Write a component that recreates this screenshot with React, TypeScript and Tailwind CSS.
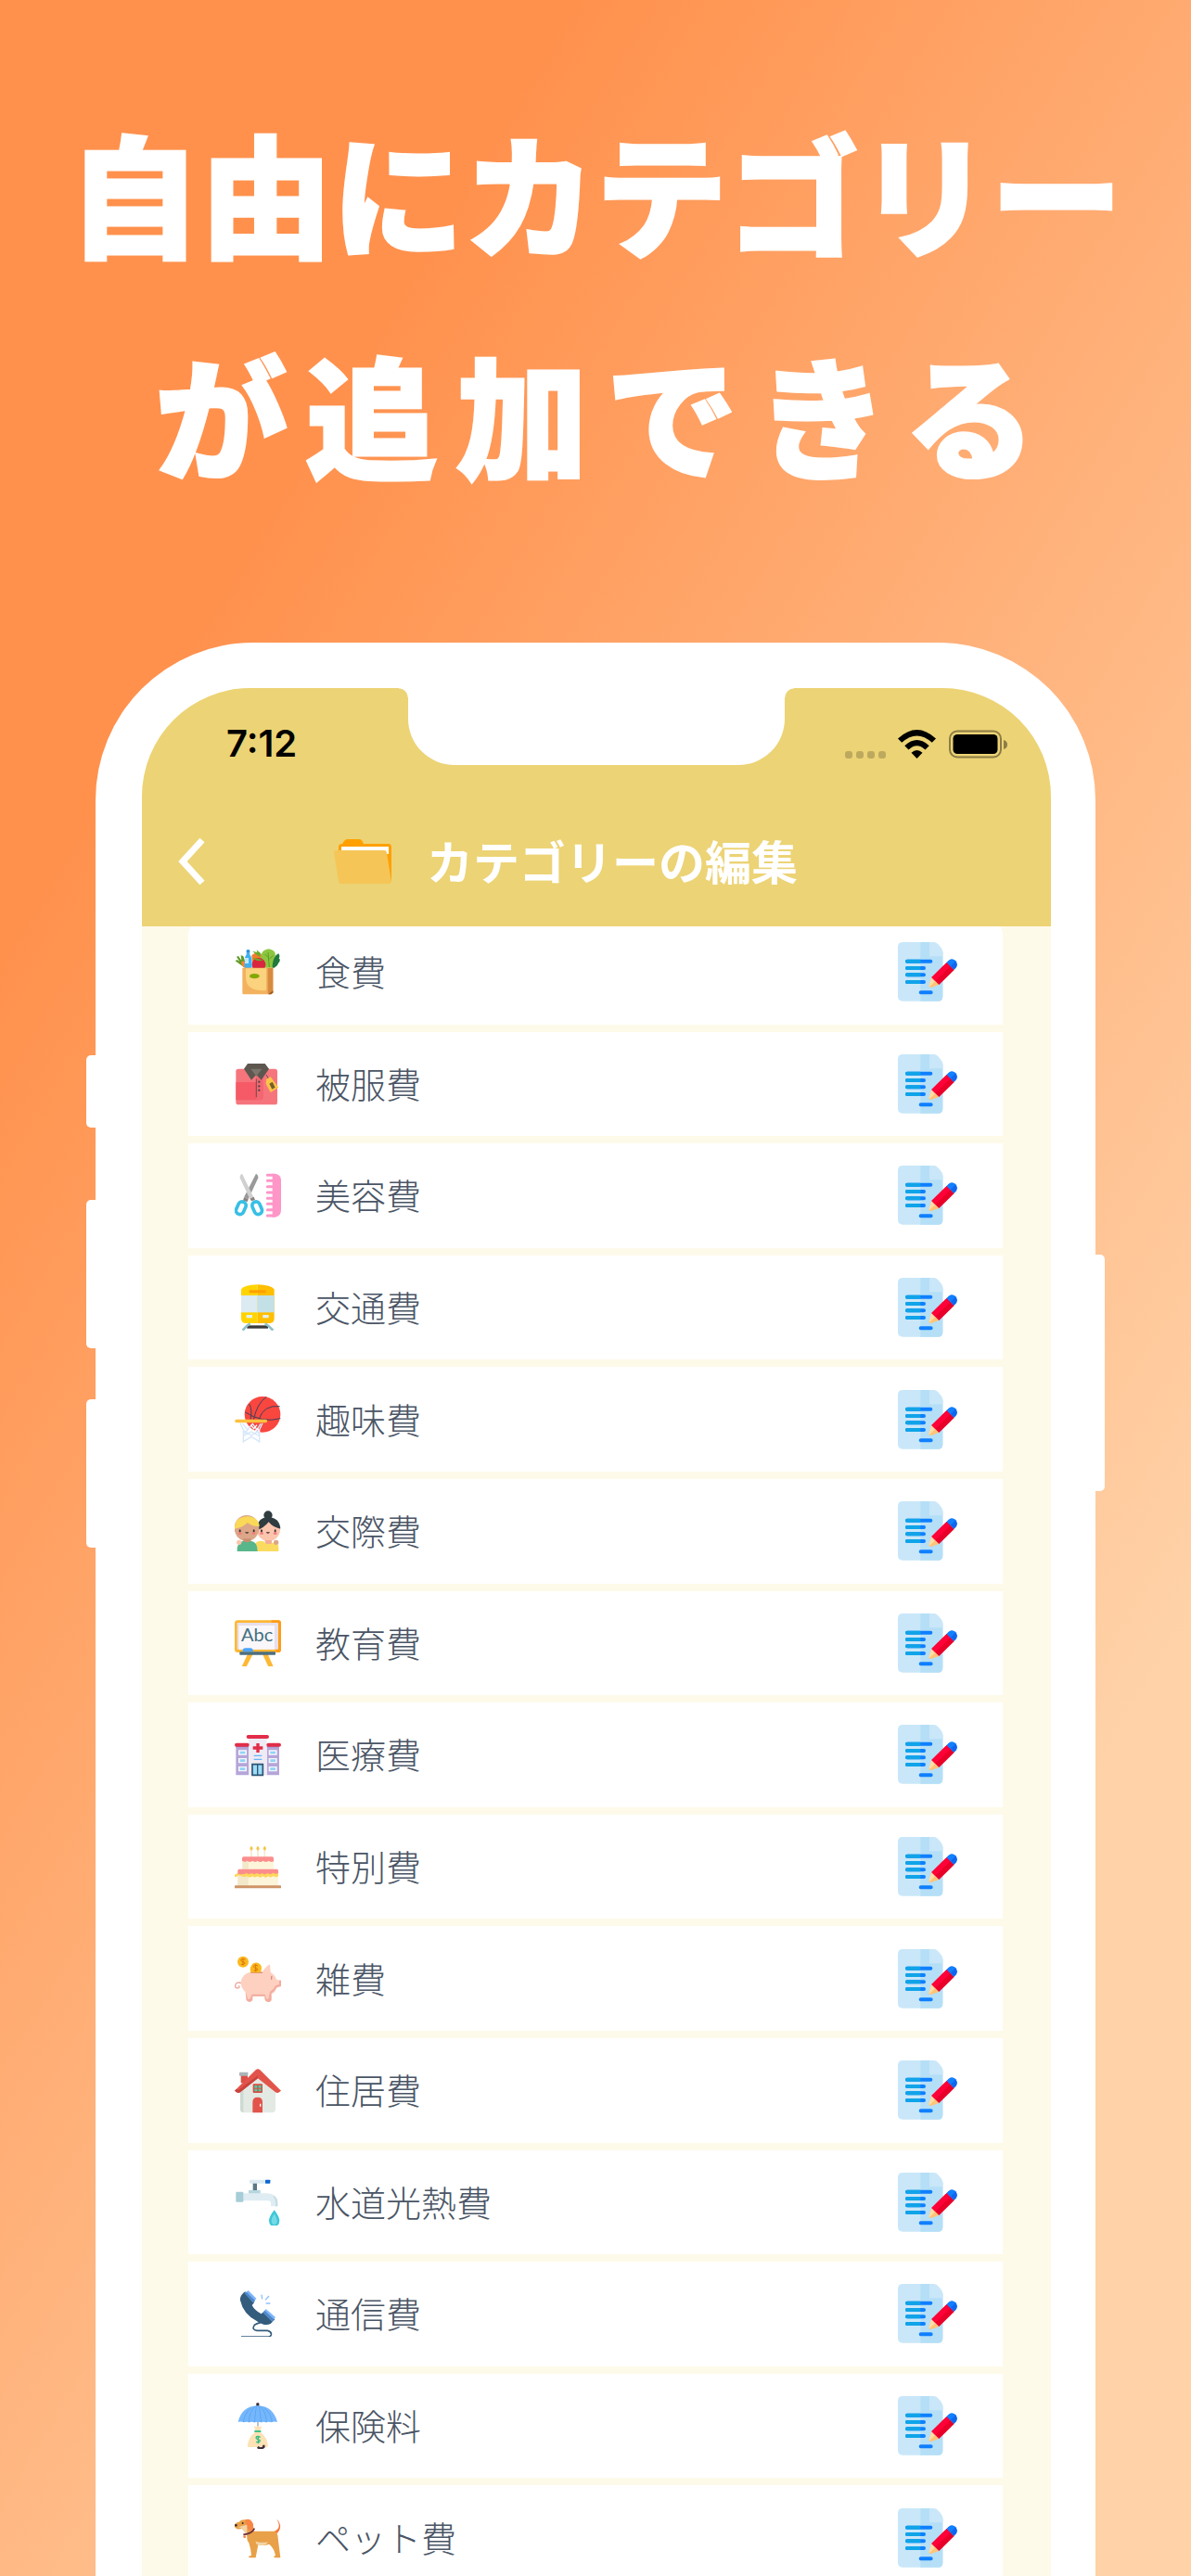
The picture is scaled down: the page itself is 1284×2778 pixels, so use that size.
import type { ReactNode } from "react";

type Category = {
  name: string;
  icon: ReactNode;
};

const CategoryIcon = ({ children }: { children: ReactNode }) => (
  <svg viewBox="0 0 150 150" className="size-[50px] shrink-0" aria-hidden="true">
    {children}
  </svg>
);

const FoodIcon = () => (
  <CategoryIcon>
    <path d="M30 60 2 40l6-4 8 6-10-16 6-2 10 14-2-16 8 2 6 20 10 16z" fill="#5f9a26" />
    <path d="M22 42c8-4 18 0 24 10l6 12H36C26 60 20 50 22 42z" fill="#f58634" />
    <path d="M55 22c10-12 28-12 36 2l-8 40H58z" fill="#f47b2c" />
    <path d="M57 8l16 4-2-8 14 12-6 10z" fill="#6aa82c" />
    <path d="M38 14h11v6c6 6 7 12 7 42H32c0-30 0-36 6-42z" fill="#3fb0f2" />
    <rect x="38" y="4" width="11" height="10" rx="2" fill="#2a8fdc" />
    <path d="M33 30h12v18H33z" fill="#bfe8fb" />
    <path d="M86 20c4-18 26-24 38-14 10 6 8 18 6 24 4 14-2 24-8 32H90c-6-12-10-28-4-42z" fill="#8cc63f" />
    <path d="M108 12l4 48M112 34l12-12M110 30 98 18" stroke="#5f9a26" strokeWidth="3" fill="none" />
    <path d="M122 62c0-20 6-40 20-46 4 6 4 10 1 16 5 0 4 10-1 14-2 8-10 14-14 16z" fill="#1f7a3c" />
    <circle cx="78" cy="52" r="22" fill="#d9263e" />
    <path d="M58 30l18 2 16 6-14 2-8-2z" fill="#6aa82c" />
    <path d="M25 62h99v82l-6 4H29q-4 0-4-4z" fill="#f3b25e" />
    <path d="M36 64h66v64q0 8-8 8-56 0-58-40z" fill="#fbd27d" />
    <path d="M107 62h17v80l-12 6-5-4z" fill="#d78b3e" />
    <path d="M108 148l16-12v6l-6 6z" fill="#9a5a24" />
    <ellipse cx="64" cy="89" rx="16" ry="8" fill="#82a800" />
  </CategoryIcon>
);

const ClothesIcon = () => (
  <CategoryIcon>
    <rect x="4" y="26" width="134" height="116" rx="8" fill="#f6757d" />
    <path d="M4 69h88v48q0 10-10 10H4z" fill="#f55a66" />
    <path d="M70 50h22v66q0 10-10 10H70z" fill="#f4666f" />
    <path d="M42 9h56l13 17-25 36-16-17-16 17-24-36z" fill="#5d5750" />
    <path d="M52 26h36L70 50z" fill="#7c756e" />
    <path d="M70 58v60" stroke="#6b4d50" strokeWidth="3" />
    <circle cx="79" cy="68" r="3.5" fill="#5d4347" />
    <circle cx="79" cy="82" r="3.5" fill="#5d4347" />
    <circle cx="79" cy="95" r="3.5" fill="#5d4347" />
    <path d="M102 45l10 16" stroke="#5d5750" strokeWidth="3" />
    <path d="M102 60l14-8 26 34-26 16-15-28z" fill="#fbc546" />
    <path d="M112 74l10-6 9 18-10 6z" fill="#75602b" />
  </CategoryIcon>
);

const BeautyIcon = () => (
  <CategoryIcon>
    <path d="M69 5q8 4 7 14L44 88l-14-6z" fill="#999" />
    <path d="M24 5q-8 4-7 14l33 70 12-6z" fill="#d0d0d0" />
    <path d="M30 82l14 6-3 8-14-4zM50 86l12-6 4 10-12 4z" fill="#8a807c" />
    <rect x="8" y="95" width="25" height="42" rx="12" transform="rotate(24 20 116)" fill="none" stroke="#38bfe5" strokeWidth="11" />
    <rect x="60" y="95" width="25" height="42" rx="12" transform="rotate(-24 73 116)" fill="none" stroke="#38bfe5" strokeWidth="11" />
    <path d="M122 5h8q20 2 20 22v96q0 20-20 23h-8z" fill="#ff96c8" />
    <path
      d="M106 10h20M106 28h20M106 47h20M106 66h20M106 85h20M106 103h20M106 122h20M106 141h20"
      stroke="#ff96c8"
      strokeWidth="9"
      strokeLinecap="round"
    />
  </CategoryIcon>
);

const TrainIcon = () => (
  <CategoryIcon>
    <path d="M21 16Q30 3 74 1v125H35q-14-2-14-16z" fill="#ffd400" />
    <path d="M128 16Q118 3 74 1v125h40q14-2 14-16z" fill="#ffbe00" />
    <path d="M47 19h54v9H47z" fill="#ff9f00" />
    <path d="M21 36h53v55H21z" fill="#dceaf1" />
    <path d="M74 36h54v55H74z" fill="#c3e0e6" />
    <path d="M38 99h19v10H38zM91 99h19v10H91z" fill="#e3f0f2" />
    <path d="M40 133h68v10H40z" fill="#3c3c3c" />
    <path d="M50 127q-12 6-24 22M98 127q12 6 26 22" stroke="#8fc0c9" strokeWidth="8" fill="none" />
  </CategoryIcon>
);

const HobbyIcon = () => (
  <CategoryIcon>
    <circle cx="90" cy="58" r="58" fill="#f9463f" />
    <path
      d="M103 1Q72 22 61 76M47 24q11 18 4 50M34 51q56 36 114 20M146 32q-52-6-68 42"
      stroke="#3d4256"
      strokeWidth="3"
      fill="none"
    />
    <path
      d="M18 86l10 22v43M90 86l-10 22v43M26 88l16 20 16-20 14 20 12-20M28 110l26 16 26-16M28 128l26-14 26 14M28 146l26-16 26 16M42 108l-14 14M68 108l12 14"
      stroke="#d5e7fa"
      strokeWidth="4"
      fill="none"
    />
    <path d="M52 92l10 12 10-12M64 114l10-10 6 10" stroke="#fff" strokeWidth="4" fill="none" />
    <rect x="1" y="74" width="104" height="11" rx="5" fill="#fdc03f" />
  </CategoryIcon>
);

const FriendsIcon = () => (
  <CategoryIcon>
    <circle cx="108" cy="24" r="14" fill="#2f3c40" />
    <path d="M70 66q4-34 38-36 36 2 40 36l-6 10H76z" fill="#2f3c40" />
    <path d="M72 72q22-6 38-26 14 18 38 22-2 34-38 42-36-6-38-38z" fill="#fcc5ae" />
    <path d="M98 105h22v18H98z" fill="#f3ae97" />
    <path d="M66 141v-22q2-12 20-12 10 0 12 6 12 10 24 0 20-4 20 14v14z" fill="#fbdb5f" />
    <ellipse cx="39" cy="66" rx="40" ry="42" fill="#dca688" />
    <path d="M0 68q0-38 40-40 38 2 40 32-24 2-38-12Q26 64 0 68z" fill="#f9d957" />
    <path d="M28 100h24v20H28z" fill="#c68f70" />
    <path d="M8 141q-2-30 20-34 12 10 24 0 22 2 22 34z" fill="#58b68b" />
    <circle cx="14" cy="112" r="8" fill="#fcc5ae" />
    <circle cx="134" cy="112" r="8" fill="#dca688" />
    <g fill="#3b3030">
      <ellipse cx="17" cy="75" rx="3" ry="5" />
      <ellipse cx="62" cy="75" rx="3" ry="5" />
      <ellipse cx="87" cy="75" rx="3" ry="5" />
      <ellipse cx="131" cy="75" rx="3" ry="5" />
      <path d="M33 79h13q-6 9-13 0zM101 79h13q-6 9-13 0z" />
    </g>
    <g fill="#f08080">
      <ellipse cx="17" cy="83" rx="6" ry="4" />
      <ellipse cx="61" cy="83" rx="6" ry="4" />
      <ellipse cx="87" cy="83" rx="6" ry="4" />
      <ellipse cx="131" cy="83" rx="6" ry="4" />
    </g>
  </CategoryIcon>
);

const EducationIcon = () => (
  <CategoryIcon>
    <path d="M42 110h17l-21 41H23zM90 110h17l18 41h-16z" fill="#fdb834" />
    <rect x="0" y="1" width="150" height="104" rx="10" fill="#fdb834" />
    <path d="M118 1h22q10 0 10 10v84q0 10-10 10h-6z" fill="#ff9d17" />
    <rect x="8" y="9" width="133" height="86" rx="2" fill="#e7dfe9" />
    <path d="M14 18h115v77H14z" fill="#faf7fb" />
    <text x="21" y="68" fontFamily="Lato, 'Liberation Sans', sans-serif" fontSize="60" fill="#43707f">
      Abc
    </text>
    <rect x="16" y="103" width="116" height="10" rx="2" fill="#4c6f80" />
    <path d="M26 103V96q2-5 8-5h18q8 1 8 12z" fill="#4aa3fb" />
  </CategoryIcon>
);

const MedicalIcon = () => (
  <CategoryIcon>
    <path d="M4 44h41v98H4zM104 44h40v98h-40z" fill="#b5a6d9" />
    <path d="M4 44h41v8H4zM104 44h40v8h-40z" fill="#9d8cc4" />
    <path d="M45 22h59v120H45z" fill="#efebf4" />
    <path
      d="M12 61h27v16H12zM12 87h27v16H12zM12 114h27v16H12zM110 61h27v16h-27zM110 87h27v16h-27zM110 114h27v16h-27z"
      fill="#f7f5fb"
    />
    <path
      d="M17 69h17M17 95h17M17 122h17M115 69h17M115 95h17M115 122h17"
      stroke="#8fd3f8"
      strokeWidth="8"
    />
    <rect x="0" y="38" width="47" height="12" rx="6" fill="#e22d49" />
    <rect x="103" y="38" width="47" height="12" rx="6" fill="#e22d49" />
    <rect x="38" y="12" width="73" height="12" rx="6" fill="#e22d49" />
    <path d="M70 39h10v10h11v10H80v10H70V59H59V49h11z" fill="#e22d49" />
    <path d="M62 79h26M62 91h26" stroke="#69b5f6" strokeWidth="4" />
    <path d="M57 107h34v35H57z" fill="#9bdcf9" stroke="#2d5372" strokeWidth="5" />
    <path d="M74 107v35" stroke="#2d5372" strokeWidth="4" />
  </CategoryIcon>
);

const SpecialIcon = () => (
  <CategoryIcon>
    <path d="M54 20v26M75 20v26M97 20v26" stroke="#f6e9cf" strokeWidth="5" />
    <path d="M54 8q10 9 0 15-10-6 0-15zM75 8q10 9 0 15-10-6 0-15zM97 8q10 9 0 15-10-6 0-15z" fill="#f6c64b" />
    <path d="M25 50h101v33H25zM10 90h131v48H10z" fill="#fdf5da" />
    <path d="M25 50h20v33H25zM10 90h34v48H10z" fill="#f3e8c9" />
    <path
      d="M24 48q0-5 5-5h92q5 0 5 5v10q-8 4-16-2-9 7-18 0-9 8-18 0-8 7-16 0-9 7-17 0-8 6-17 0z"
      fill="#fc8d8d"
    />
    <path d="M10 96h131v10q-8 6-16-1-8 8-17 1-8 8-17 0-8 8-17 0-9 7-16 0-9 7-18 0-9 6-25-3-14 9-25 3z" fill="#fdd75b" />
    <path d="M10 88q0-5 5-5h121q5 0 5 5v8q-8 5-17-1-9 8-18 1-9 8-17 0-8 7-17 0-9 7-17 0-8 6-17 0-9 6-28 2z" fill="#fc8d8d" />
    <rect x="0" y="136" width="150" height="9" rx="2" fill="#cf9468" />
  </CategoryIcon>
);

const MiscIcon = () => (
  <CategoryIcon>
    <path d="M24 90q-18-8-22 6-1 10 9 9 7-3 2-8" stroke="#eda79c" strokeWidth="4" fill="none" />
    <path
      d="M20 88q2-30 36-36h34q12-18 24-24l2 26q14 8 20 24l14 2v20l-14 4q-4 14-16 20v20q-6 8-20 2l-4-14H56v12q-8 8-18 0l-4-28q-14-12-14-30z"
      fill="#fdd0c0"
    />
    <path
      d="M36 118l2 26q10 12 20 0v-13h40q-2 9 2 15 12 10 18-2v-22q12-8 18-20l14-4v-18h-6v13l-12 4q-6 14-18 20l-4 20q-4 8-8 0l-4-12H56l-6 14q-6 4-8 0z"
      fill="#f3ac9f"
    />
    <path d="M52 55h38" stroke="#d98f84" strokeWidth="4" />
    <path d="M119 67v9" stroke="#d78d82" strokeWidth="4" strokeLinecap="round" />
    <circle cx="27" cy="20" r="18" fill="#fbb91d" />
    <path d="M52 55q-6-18 8-30 16-8 26 8 3 10-2 22z" fill="#fbb91d" />
    <path
      d="M34 13q-12-6-14 2 2 6 12 7 4 8-11 6M27 8v24M75 33q-12-6-14 2 2 6 12 7 4 8-11 6M68 28v24"
      stroke="#d9760f"
      strokeWidth="3"
      fill="none"
    />
  </CategoryIcon>
);

const HousingIcon = () => (
  <CategoryIcon>
    <path d="M20 22h22v30H20z" fill="#d94f45" />
    <rect x="15" y="17" width="28" height="12" rx="2" fill="#aab4b8" />
    <path d="M18 60 75 20l57 40v76q0 12-12 12H30q-12 0-12-12z" fill="#e3e9e3" />
    <path d="M18 60l10-6v94q-10-2-10-12z" fill="#cfd9d3" />
    <path d="M0 77 68 10q7-6 14 0l68 67-6 5q-6 4-12 0L75 37 18 82q-6 4-12 0z" fill="#e2544b" />
    <path d="M75 37 18 82q-6 4-12 0l-6-5 5-5 8 2 62-46z" fill="#c9433d" />
    <rect x="59" y="55" width="31" height="29" rx="3" fill="#d94f45" />
    <path d="M64 60h9v8h-9zM77 60h9v8h-9zM64 71h9v8h-9zM77 71h9v8h-9z" fill="#41d0a4" />
    <path d="M58 148v-34q0-16 16-16t16 16v34z" fill="#e2544b" />
    <path d="M83 119v9" stroke="#fff" strokeWidth="4" />
  </CategoryIcon>
);

const UtilityIcon = () => (
  <CategoryIcon>
    <rect x="48" y="2" width="56" height="12" rx="3" fill="#dcebf2" />
    <rect x="99" y="2" width="16" height="12" rx="2" fill="#0c66d4" />
    <path d="M59 14h13v24H59z" fill="#5a7984" />
    <path d="M45 36h38v12H45z" fill="#b5d6de" />
    <path d="M25 46h82q32 2 32 32v10h-22V78q0-8-9-8H25z" fill="#dfedf3" />
    <path d="M128 54q11 8 11 24v10h-7V78q0-14-8-24z" fill="#c5dde5" />
    <rect x="4" y="41" width="24" height="33" rx="3" fill="#a6cdd8" />
    <path d="M128 100q17 22 17 35 0 17-17 18-17-1-17-18 0-13 17-35z" fill="#3fc6d8" />
    <path d="M128 112q9 14 9 24 0 10-9 12-9-2-9-12 0-10 9-24z" fill="#74dbe6" />
  </CategoryIcon>
);

const PhoneIcon = () => (
  <CategoryIcon>
    <path d="M28 8q-12 12-10 24 10 44 52 66 28 20 46 10l14-14-30-30-14 12Q64 64 56 48l8-10-30-34z" fill="#345c7d" />
    <path d="M33 8 44 0l26 26-10 14zM92 72l9-12 31 27-10 14z" fill="#7db5fb" />
    <path d="M32 10l6-5 28 28-6 7zM92 72l5-7 30 29-5 7z" fill="#4f88c9" />
    <path d="M87 14l2 14M111 18l-12 13M115 42h-14" stroke="#8ec1fb" strokeWidth="4" />
    <path
      d="M84 104q-10 2-20 8-10 16 8 18h34q14 4 12 14-4 8-12 6H21"
      stroke="#345c7d"
      strokeWidth="5"
      fill="none"
    />
  </CategoryIcon>
);

const InsuranceIcon = () => (
  <CategoryIcon>
    <rect x="70" y="1" width="9" height="12" rx="3" fill="#3a2c3a" />
    <path d="M72 58h6v22h-6z" fill="#b9c3cf" />
    <path
      d="M11 63Q22 12 75 10q50 2 63 53-12-4-20 1-10-4-16 0-12-4-16 0-12-4-22 0-10-4-16 0-10-4-18 0-10-4-19-1z"
      fill="#74b7fd"
    />
    <path
      d="M46 64q0-30 20-53M103 64q0-30-20-53M64 64l6-53M86 64l-7-53M28 63q4-30 26-46M121 63q-4-30-26-46"
      stroke="#559be9"
      strokeWidth="2"
      fill="none"
    />
    <path d="M62 76l8 3 6-4 6 4 6-3-6 16H68z" fill="#fde2b5" />
    <path d="M66 96h18q22 18 24 44-4 6-10 4H46q-6 0-4-8 4-26 24-40z" fill="#fde2b5" />
    <path d="M64 93h21" stroke="#43c389" strokeWidth="6" />
    <path d="M83 112q-12-6-14 2 2 5 12 7 4 9-12 6M76 107v26" stroke="#37bd82" strokeWidth="4" fill="none" />
    <path d="M74 144q10 8 20 0v-7" stroke="#3a2c3a" strokeWidth="7" fill="none" />
  </CategoryIcon>
);

const PetIcon = () => (
  <CategoryIcon>
    <path d="M134 62q16-12 13-30-2-12-11-18 20 30-14 42z" fill="#f57a3f" />
    <path
      d="M0 32q4-8 14-9 8-10 28-6 20 6 20 36l48 0h20q10 6 10 22l8 64h-18l-4-4 6-4q-4-22-20-36-20 6-36 2l-8 42H48l-4-4 10-4q-2-22-8-40-8-8-6-24-6-12-16-22-20 4-24-6z"
      fill="#e8a148"
    />
    <path d="M34 16q18-6 26 14 2 18-8 24-16-8-18-38z" fill="#f88746" />
    <path d="M10 40q16-4 30-8 0 14 0 30l-10-8q-4-12-20-14z" fill="#f2d3a6" />
    <path d="M68 86q22 6 40 2-6 14-30 10-10-2-10-12z" fill="#f2d3a6" />
    <path d="M64 44q-8 18-36 20" stroke="#6c2f3a" strokeWidth="5" fill="none" />
    <circle cx="32" cy="71" r="4" fill="#f57a3f" />
    <circle cx="4" cy="34" r="4" fill="#3d2b2b" />
    <circle cx="26" cy="27" r="3" fill="#3d2b2b" />
  </CategoryIcon>
);

const EditIcon = () => (
  <svg viewBox="0 0 192 192" className="size-16" aria-hidden="true">
    <path d="M16 0h100l29 32v144q0 15-15 15H16Q0 191 0 175V16Q0 0 16 0z" fill="#c9e7f9" />
    <path d="M73 0h43l29 32v144q0 15-15 15H73z" fill="#b5dff6" />
    <path d="M102 0h14q8 0 14 7l9 10q6 7 6 14v15h-43z" fill="#c9e7f9" />
    <path
      d="M30 62h76M30 84h54M30 106h54M30 129h54M74 163h33"
      stroke="#0f7fff"
      strokeWidth="12"
      strokeLinecap="round"
    />
    <path d="M30 62h43M30 84h43M30 106h43M30 129h43" stroke="#10a4e8" strokeWidth="12" />
    <path
      d="M30 56a6 6 0 0 0 0 12zM30 78a6 6 0 0 0 0 12zM30 100a6 6 0 0 0 0 12zM30 123a6 6 0 0 0 0 12z"
      fill="#10a4e8"
    />
    <path d="M109 114l24 24-26 9q-9 0-6-8z" fill="#ffc477" />
    <path d="M109 114l12 12-19 19q-2-2-1-6z" fill="#ffdda6" />
    <path d="M109 114l49-48 24 24-49 48z" fill="#e80029" />
    <path d="M109 114l49-48 12 12-49 48z" fill="#ff0038" />
    <path d="M158 66l6-6q12-9 23 1 9 11 1 22l-7 7z" fill="#0f66ef" />
    <path d="M158 66l6-6q12-9 23 1l-17 17z" fill="#1180ff" />
  </svg>
);

const categories: Category[] = [
  { name: "食費", icon: <FoodIcon /> },
  { name: "被服費", icon: <ClothesIcon /> },
  { name: "美容費", icon: <BeautyIcon /> },
  { name: "交通費", icon: <TrainIcon /> },
  { name: "趣味費", icon: <HobbyIcon /> },
  { name: "交際費", icon: <FriendsIcon /> },
  { name: "教育費", icon: <EducationIcon /> },
  { name: "医療費", icon: <MedicalIcon /> },
  { name: "特別費", icon: <SpecialIcon /> },
  { name: "雑費", icon: <MiscIcon /> },
  { name: "住居費", icon: <HousingIcon /> },
  { name: "水道光熱費", icon: <UtilityIcon /> },
  { name: "通信費", icon: <PhoneIcon /> },
  { name: "保険料", icon: <InsuranceIcon /> },
  { name: "ペット費", icon: <PetIcon /> },
];

const StatusBar = () => (
  <div className="flex h-[120px] items-center justify-between pl-[91px] pr-[47px]">
    <span className="font-[Inter,sans-serif] text-[40px] font-semibold leading-none text-black">7:12</span>
    <div className="flex items-end">
      <div className="mr-[13px] flex gap-1">
        <span className="size-2 rounded-[3px] bg-[#bda95e]" />
        <span className="size-2 rounded-[3px] bg-[#bda95e]" />
        <span className="size-2 rounded-[3px] bg-[#bda95e]" />
        <span className="size-2 rounded-[3px] bg-[#bda95e]" />
      </div>
      <svg viewBox="0 0 41 31" className="mr-3.5 h-[31px] w-[41px]" aria-hidden="true">
        <path d="M0 9.500Q20.500-9.500 41 9.500l-4.200 4.300Q20.500-1 4.200 13.800z" />
        <path d="M7.300 17.200Q20.500 4.800 33.700 17.200l-4.200 4.300Q20.500 13 11.500 21.500z" />
        <path d="M14.500 24.800Q20.500 19 26.500 24.800l-6 6.200z" />
      </svg>
      <svg viewBox="0 0 63 31" className="h-[31px] w-[63px]" aria-hidden="true">
        <rect x="1" y="1.500" width="55" height="28" rx="8" fill="none" stroke="#8c7d46" strokeWidth="2" />
        <rect x="4.500" y="5" width="48" height="21" rx="4.500" />
        <path d="M59 11q4 1 4 5t-4 5z" fill="#8c7d46" />
      </svg>
    </div>
  </div>
);

const Notch = () => (
  <div className="absolute inset-x-0 top-0 flex justify-center" aria-hidden="true">
    <span className="size-2.5 bg-[radial-gradient(circle_at_0%_100%,transparent_9px,white_10px)]" />
    <span className="h-[83px] w-[406px] rounded-b-[50px] bg-white" />
    <span className="size-2.5 bg-[radial-gradient(circle_at_100%_100%,transparent_9px,white_10px)]" />
  </div>
);

const AppHeader = () => (
  <header className="relative z-10 bg-[#ecd375]">
    <StatusBar />
    <Notch />
    <div className="flex h-[137px] items-center pb-1 pl-[39px]">
      <button type="button" aria-label="戻る">
        <svg viewBox="0 0 30 52" className="h-[52px] w-[30px]" aria-hidden="true">
          <path d="M26 3 5 26l21 23" fill="none" stroke="#fff" strokeWidth="7" />
        </svg>
      </button>
      <div className="ml-[138px] flex items-center gap-[38px]">
        <svg viewBox="0 0 62 48" className="h-12 w-[62px]" aria-hidden="true">
          <path d="M5 14V8q0-3 4-3l2-3q1-2 4-2h12q3 0 4 3l1 2h27q3 0 3 4v37H30z" fill="#ffa000" />
          <path d="M8 8h51v8H8z" fill="#fff" />
          <path d="M0 14q0-2 3-2h51q3 0 3 3l5 31-1 2H8q-3 0-3-3z" fill="#f5c557" />
        </svg>
        <h2 className="pb-1 text-[50px] font-bold leading-none text-white">カテゴリーの編集</h2>
      </div>
    </div>
  </header>
);

const CategoryList = ({ items }: { items: Category[] }) => (
  <ul className="-mt-[7px] ml-[50px] mr-[52px] grid aspect-[878/1801] auto-rows-fr gap-2">
    {items.map((item) => (
      <li key={item.name} className="flex items-center bg-white pl-[50px] pr-[49px] first:rounded-t-2xl">
        {item.icon}
        <span className="ml-[37px] flex-1 pb-0.5 text-[38px] font-light leading-none text-gray-600">{item.name}</span>
        <button type="button" aria-label={`${item.name}を編集`}>
          <EditIcon />
        </button>
      </li>
    ))}
  </ul>
);

const Phone = () => (
  <div className="relative mx-[103px] flex-1 rounded-t-[170px] bg-white pl-[50px] pr-12 pt-[49px]">
    <div className="absolute right-full top-[445px] flex w-[10px] flex-col" aria-hidden="true">
      <span className="h-[78px] rounded-l-[5px] bg-white" />
      <span className="mt-[78px] h-[160px] rounded-l-[5px] bg-white" />
      <span className="mt-[55px] h-[160px] rounded-l-[5px] bg-white" />
    </div>
    <span className="absolute left-full top-[660px] h-[255px] w-[10px] rounded-r-[5px] bg-white" aria-hidden="true" />
    <div className="overflow-hidden rounded-t-[117px] bg-[#fefaea]">
      <AppHeader />
      <CategoryList items={categories} />
    </div>
  </div>
);

const App = () => {
  return (
    <main
      lang="ja"
      className="flex h-screen flex-col overflow-hidden bg-[linear-gradient(121deg,#ff914d_21%,#ffd2a8_79%)] font-['Noto_Sans_CJK_JP',sans-serif]"
    >
      <h1 className="flex flex-col items-center pb-[129px] pt-[86px] text-[142px] font-black leading-[239px] whitespace-nowrap text-white [-webkit-text-stroke:3px_white] [paint-order:stroke_fill]">
        <span>自由にカテゴリー</span>
        <span className="pl-[20px] tracking-[20px]">が追加できる</span>
      </h1>
      <Phone />
    </main>
  );
};

export default App;
